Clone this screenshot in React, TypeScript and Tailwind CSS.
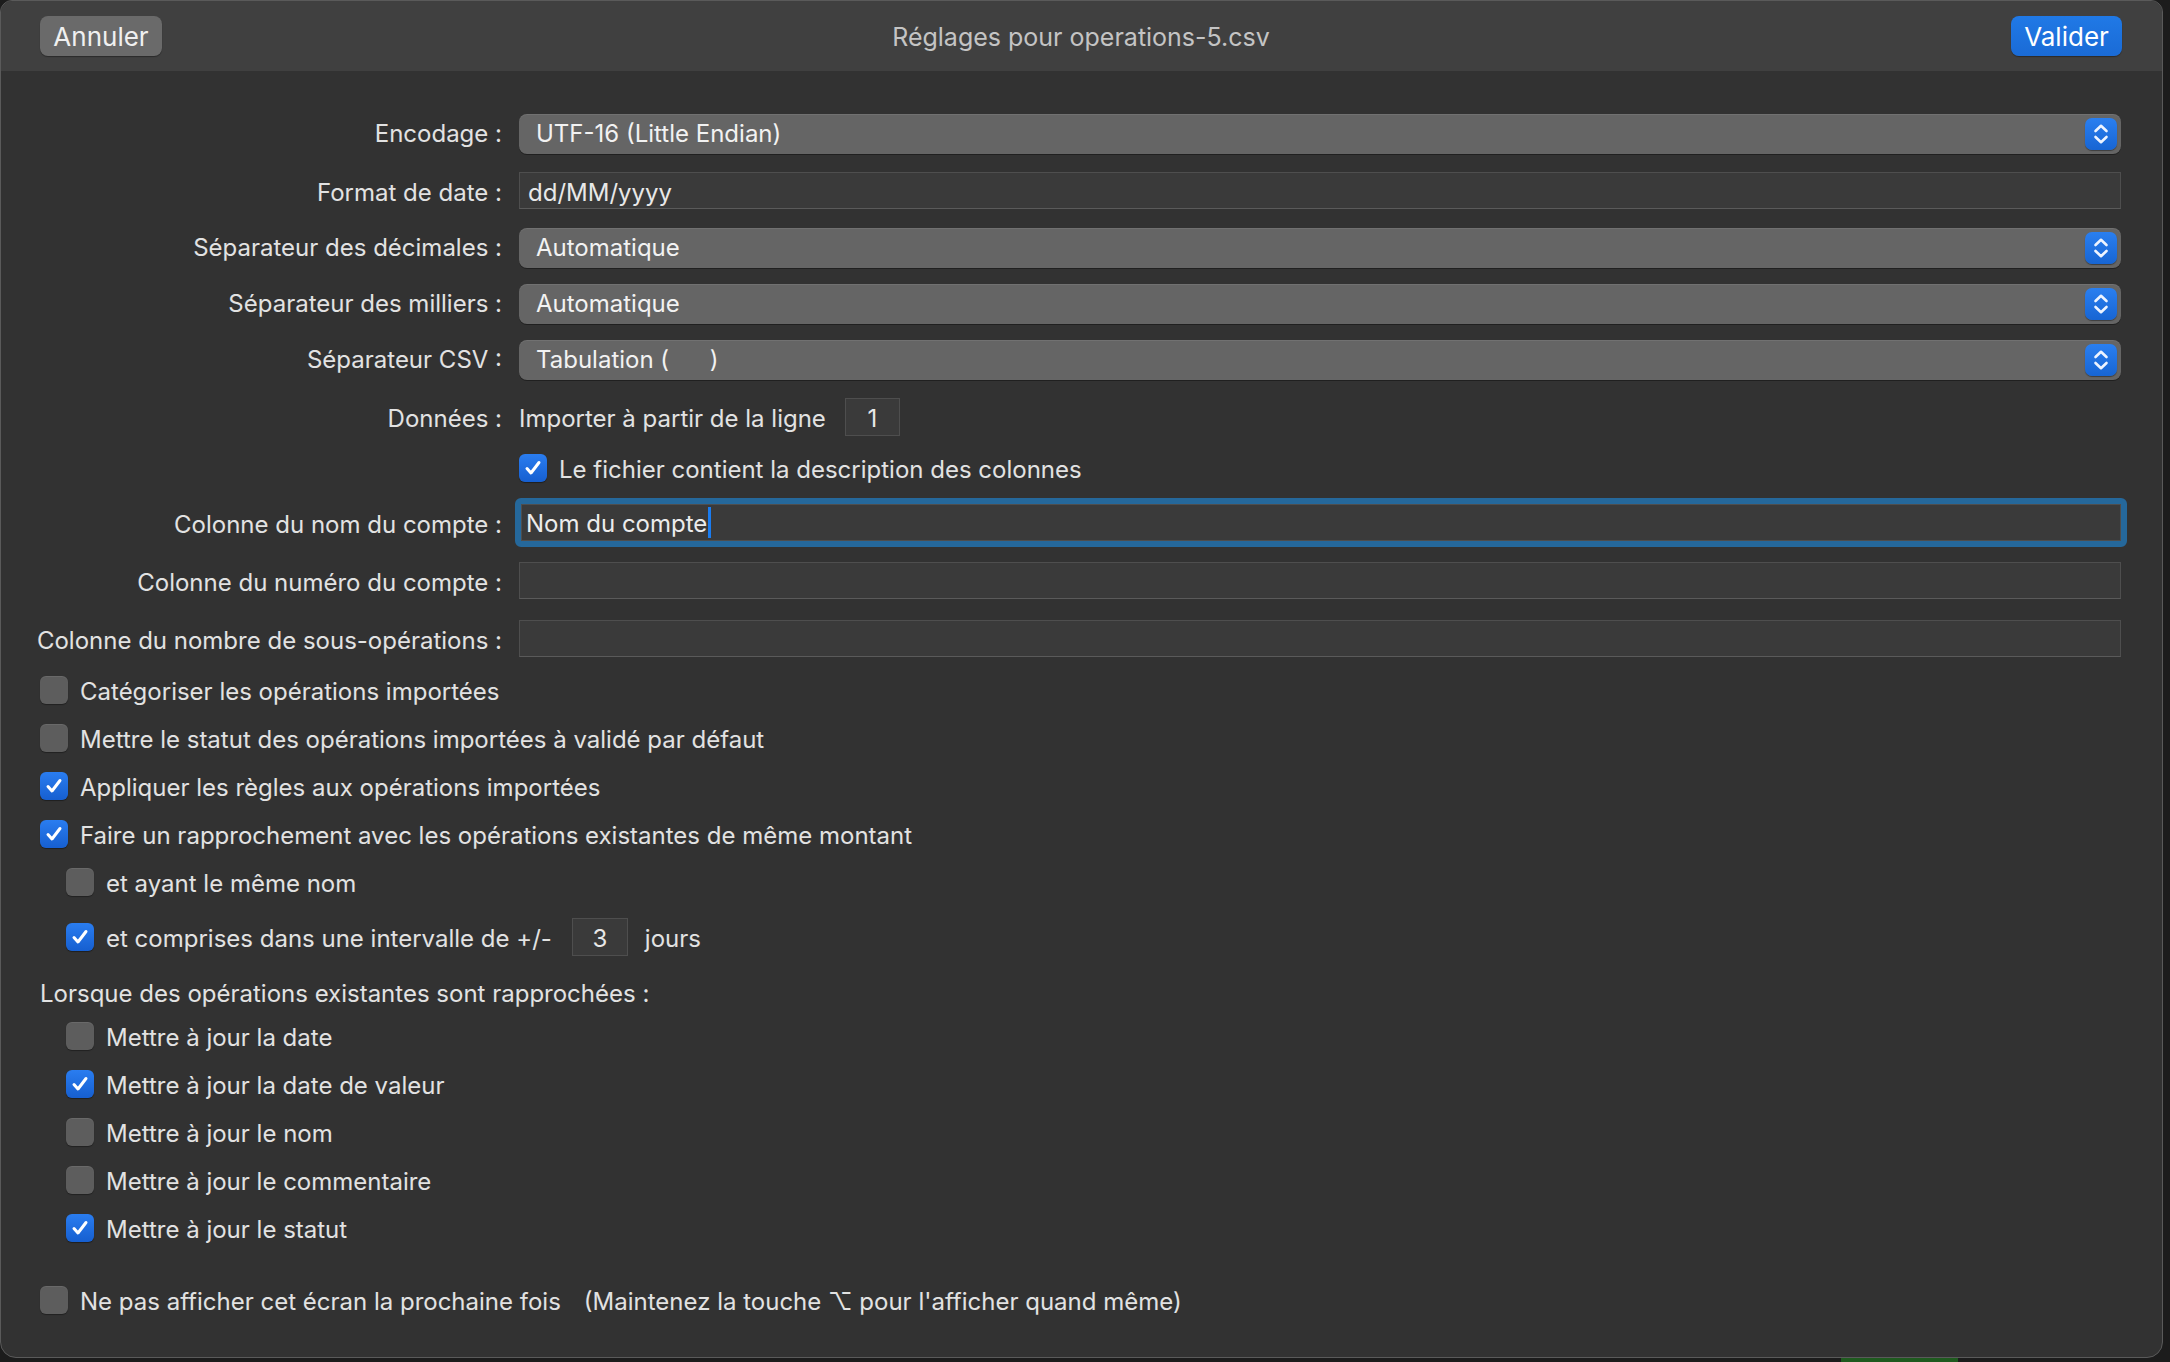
import React from 'react';

const FONT = { fontFamily: 'Inter, "Noto Sans", "DejaVu Sans", sans-serif' };

const Stepper: React.FC = () => (
  <div className="flex h-[32px] w-[32px] items-center justify-center rounded-[7px] bg-gradient-to-b from-[#2a7ff0] to-[#1765d3] shadow-[0_1px_1px_rgba(0,0,0,0.4)]">
    <svg width="18" height="24" viewBox="0 0 18 24" fill="none" stroke="#eef4ff" strokeWidth="2.6" strokeLinecap="round" strokeLinejoin="round">
      <path d="M3.5 9 L9 3.8 L14.5 9" />
      <path d="M3.5 15 L9 20.2 L14.5 15" />
    </svg>
  </div>
);

const Popup: React.FC<{ value: React.ReactNode }> = ({ value }) => (
  <div className="flex h-[40px] flex-1 items-center justify-between rounded-[8px] bg-[#656565] pl-[17px] pr-[4px] shadow-[0_1px_0_rgba(0,0,0,0.35),inset_0_1px_0_rgba(255,255,255,0.08)]">
    <span className="whitespace-pre text-[#f2f2f2]">{value}</span>
    <Stepper />
  </div>
);

const Field: React.FC<{ value?: string }> = ({ value }) => (
  <div className="flex h-[37px] flex-1 items-center border border-[#4e4e4e] border-b-[#5a5a5a] bg-[#3a3a3a] pl-[8px] pt-[4px] text-[#e8e8e8]">
    {value}
  </div>
);

const Check: React.FC<{ on?: boolean }> = ({ on }) =>
  on ? (
    <div className="flex h-[28px] w-[28px] shrink-0 items-center justify-center rounded-[6px] bg-gradient-to-b from-[#2a7df0] to-[#165fd0] shadow-[0_1px_1px_rgba(0,0,0,0.4)]">
      <svg width="20" height="20" viewBox="0 0 20 20" fill="none" stroke="#ffffff" strokeWidth="3" strokeLinecap="round" strokeLinejoin="round">
        <path d="M4 10.5 L8 15 L16 4.5" />
      </svg>
    </div>
  ) : (
    <div className="h-[28px] w-[28px] shrink-0 rounded-[6px] bg-[#5d5d5d] shadow-[inset_0_1px_0_rgba(255,255,255,0.08),0_1px_1px_rgba(0,0,0,0.35)]" />
  );

const Label: React.FC<{ children: React.ReactNode; nudge?: boolean }> = ({ children, nudge }) => (
  <div className={`flex w-[462px] shrink-0 justify-end text-[#e2e2e2] ${nudge ? 'pt-[4px]' : ''}`}>
    <span className="whitespace-nowrap">{children}</span>
  </div>
);

const Row: React.FC<{ label: string; className?: string; nudge?: boolean; children: React.ReactNode }> = ({ label, className, nudge, children }) => (
  <div className={`flex items-center gap-[17px] ${className || ''}`}>
    <Label nudge={nudge}>{label}</Label>
    {children}
  </div>
);

const CheckRow: React.FC<{ on?: boolean; text: string; indent?: boolean; className?: string }> = ({ on, text, indent, className }) => (
  <div className={`flex h-[28px] items-center gap-[12px] ${indent ? 'pl-[26px]' : ''} ${className || ''}`}>
    <Check on={on} />
    <span className="pt-[4px] text-[#e2e2e2]">{text}</span>
  </div>
);

const App: React.FC = () => {
  return (
    <div className="flex h-[1362px] w-[2170px] flex-col overflow-hidden bg-[#1c1c1c] text-[24px] leading-none" style={FONT}>
      <div className="flex h-[1358px]">
        {/* sheet */}
        <div className="flex w-[2163px] flex-col overflow-hidden rounded-b-[16px] rounded-t-[12px] border border-[#5a5a5a] bg-[#323232]">
          {/* header */}
          <div className="grid h-[70px] shrink-0 grid-cols-[1fr_auto_1fr] items-center bg-[#404040] pl-[39px] pr-[40px]">
            <div className="flex">
              <button className="h-[40px] w-[122px] rounded-[8px] bg-[#6a6a6a] pt-[2px] text-[26px] text-[#f0f0f0] shadow-[0_1px_1px_rgba(0,0,0,0.35)]">
                Annuler
              </button>
            </div>
            <div className="pt-[2px] text-[25px] text-[#c4c4c4]">Réglages pour operations-5.csv</div>
            <div className="flex justify-end">
              <button className="h-[40px] w-[111px] rounded-[8px] bg-gradient-to-b from-[#2079e6] to-[#1a6bd6] pt-[2px] text-[26px] text-white shadow-[0_1px_1px_rgba(0,0,0,0.35)]">
                Valider
              </button>
            </div>
          </div>

          {/* form */}
          <div className="flex flex-col pl-[39px] pr-[41px]">
            <Row label="Encodage :" className="mt-[43px] h-[40px]">
              <Popup value="UTF-16 (Little Endian)" />
            </Row>
            <Row label="Format de date :" nudge className="mt-[18px] h-[37px]">
              <Field value="dd/MM/yyyy" />
            </Row>
            <Row label="Séparateur des décimales :" className="mt-[19px] h-[40px]">
              <Popup value="Automatique" />
            </Row>
            <Row label="Séparateur des milliers :" className="mt-[16px] h-[40px]">
              <Popup value="Automatique" />
            </Row>
            <Row label="Séparateur CSV :" className="mt-[16px] h-[40px]">
              <Popup value={'Tabulation (      )'} />
            </Row>
            <Row label="Données :" nudge className="mt-[18px] h-[38px]">
              <span className="pt-[4px] text-[#e2e2e2]">Importer à partir de la ligne</span>
              <div className="ml-[2px] flex h-[38px] w-[55px] items-center justify-center border border-[#4e4e4e] bg-[#3a3a3a] pt-[3px] text-[#e8e8e8]">1</div>
            </Row>
            <div className="mt-[18px] flex h-[28px] items-center gap-[12px] pl-[479px]">
              <Check on />
              <span className="pt-[4px] text-[#e2e2e2]">Le fichier contient la description des colonnes</span>
            </div>
            <Row label="Colonne du nom du compte :" nudge className="mt-[16px] h-[49px]">
              <div className="-ml-[4px] -mr-[6px] flex h-[49px] flex-1 rounded-[6px] border-[6px] border-[#25689b]">
                <div className="flex flex-1 items-center border border-[#4e4e4e] bg-[#3a3a3a] pl-[4px] pt-[3px] text-[#ececec]">
                  Nom du compte
                  <span className="ml-[1px] -mt-[3px] h-[31px] w-[3px] bg-[#1a7cf0]" />
                </div>
              </div>
            </Row>
            <Row label="Colonne du numéro du compte :" nudge className="mt-[15px] h-[37px]">
              <Field />
            </Row>
            <Row label="Colonne du nombre de sous-opérations :" nudge className="mt-[21px] h-[37px]">
              <Field />
            </Row>

            <CheckRow text="Catégoriser les opérations importées" className="mt-[19px]" />
            <CheckRow text="Mettre le statut des opérations importées à validé par défaut" className="mt-[20px]" />
            <CheckRow on text="Appliquer les règles aux opérations importées" className="mt-[20px]" />
            <CheckRow on text="Faire un rapprochement avec les opérations existantes de même montant" className="mt-[20px]" />
            <CheckRow indent text="et ayant le même nom" className="mt-[20px]" />
            <div className="mt-[22px] flex h-[38px] items-center pl-[26px]">
              <Check on />
              <span className="ml-[12px] pt-[4px] text-[#e2e2e2]">et comprises dans une intervalle de +/-</span>
              <div className="ml-[20px] flex h-[38px] w-[56px] items-center justify-center border border-[#4e4e4e] bg-[#3a3a3a] pt-[3px] text-[#e8e8e8]">3</div>
              <span className="ml-[17px] pt-[4px] text-[#e2e2e2]">jours</span>
            </div>
            <div className="mt-[22px] flex h-[28px] items-center pt-[4px] text-[#e2e2e2]">Lorsque des opérations existantes sont rapprochées :</div>
            <CheckRow indent text="Mettre à jour la date" className="mt-[16px]" />
            <CheckRow indent on text="Mettre à jour la date de valeur" className="mt-[20px]" />
            <CheckRow indent text="Mettre à jour le nom" className="mt-[20px]" />
            <CheckRow indent text="Mettre à jour le commentaire" className="mt-[20px]" />
            <CheckRow indent on text="Mettre à jour le statut" className="mt-[20px]" />
            <div className="mt-[44px] flex h-[28px] items-center">
              <Check />
              <span className="ml-[12px] pt-[4px] text-[#e2e2e2]">Ne pas afficher cet écran la prochaine fois</span>
              <span className="ml-[23px] pt-[4px] text-[#e2e2e2]">(Maintenez la touche ⌥ pour l'afficher quand même)</span>
            </div>
          </div>
        </div>
        <div className="flex-1 bg-[#1c1c1c]" />
      </div>
      <div className="flex h-[4px]">
        <div className="ml-[1841px] h-[4px] w-[117px] bg-[#1f5a1f]" />
      </div>
    </div>
  );
};

export default App;
